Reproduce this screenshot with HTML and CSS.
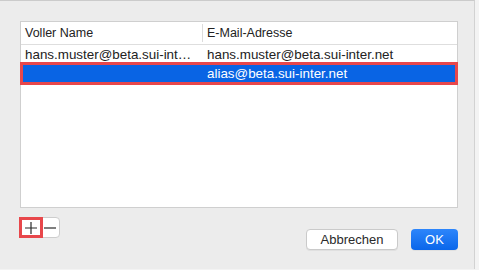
FILE: index.html
```html
<!DOCTYPE html>
<html lang="de">
<head>
  <meta charset="UTF-8" />
  <title>E-Mail-Adressen</title>
  <link rel="stylesheet" href="styles.css">
</head>
<body>

<div class="dialog">
  <div class="table">
    <div class="row head">
      <div class="cell name">Voller Name</div>
      <div class="cell mail">E-Mail-Adresse</div>
    </div>
    <div class="row">
      <div class="cell name">hans.muster@beta.sui-inter.net</div>
      <div class="cell mail">hans.muster@beta.sui-inter.net</div>
    </div>
    <div class="row selected">
      <div class="cell name"></div>
      <div class="cell mail">alias@beta.sui-inter.net</div>
    </div>
  </div>

  <div class="footer">
    <div class="segmented">
      <button class="seg add">
        <svg width="14" height="14" viewBox="0 0 14 14"><path d="M7 1v12M1 7h12" stroke="#2b2b2b" stroke-width="1.2" fill="none"/></svg>
      </button>
      <button class="seg remove">
        <svg width="14" height="14" viewBox="0 0 14 14"><path d="M1 7h12" stroke="#2b2b2b" stroke-width="1.2" fill="none"/></svg>
      </button>
    </div>
    <div class="actions">
      <button class="btn">Abbrechen</button>
      <button class="btn primary">OK</button>
    </div>
  </div>
</div>

</body>
</html>
```

FILE: styles.css
```css
body {
  margin: 0;
  background: #f3f3f3;
  font-family: "Liberation Sans", Arial, sans-serif;
  color: #222;
}

.dialog {
  width: 475px;
  height: 269px;
  background: #ececec;
  border-top: 1px solid #cbcbcb;
  border-right: 1px solid #d2d2d2;
  padding: 20px 0 0 20px;
  box-sizing: border-box;
}

.table {
  width: 438px;
  height: 187px;
  background: #fff;
  border: 1px solid #cfcfcf;
  box-sizing: border-box;
}

.row {
  display: flex;
  height: 18px;
  align-items: center;
  font-size: 13.4px;
}

.row.head {
  height: 22px;
  border-bottom: 1px solid #dedede;
  font-size: 12.5px;
}

.cell {
  white-space: nowrap;
  overflow: hidden;
  text-overflow: ellipsis;
  box-sizing: border-box;
}

.cell.name {
  width: 181px;
  padding: 0 6px 0 4px;
}

.cell.mail {
  flex: 1;
  padding-left: 5px;
}

.head .cell.mail {
  border-left: 1px solid #dcdcdc;
  height: 18px;
  line-height: 18px;
  padding-left: 4px;
}

.row.selected {
  height: 21px;
  background: #0964e4;
  color: #fff;
  outline: 3px solid #e8474b;
  outline-offset: -2px;
}

.footer {
  display: flex;
  justify-content: space-between;
  align-items: flex-start;
  width: 438px;
  margin-top: 9px;
}

.segmented {
  display: flex;
  width: 41px;
  height: 21px;
  background: #fff;
  border: 1px solid #cdcdcd;
  border-radius: 4px;
  box-sizing: border-box;
  margin-left: -1px;
}

.seg {
  border: none;
  background: none;
  padding: 0;
  display: flex;
  align-items: center;
  justify-content: center;
}

.seg.add {
  width: 22px;
  height: 19px;
  outline: 3px solid #e8474b;
  outline-offset: -2px;
}

.seg.remove {
  width: 16px;
  height: 19px;
}

.actions {
  display: flex;
  gap: 13px;
  margin-top: 12px;
}

.btn {
  height: 21px;
  width: 92px;
  font-family: "Liberation Sans", Arial, sans-serif;
  font-size: 13px;
  color: #2a2a2a;
  background: #fff;
  border: 1px solid #cacaca;
  border-radius: 4px;
  padding: 0;
  box-shadow: 0 1px 0 rgba(0,0,0,0.05);
}

.btn.primary {
  width: 47px;
  color: #fff;
  border: none;
  background: linear-gradient(#2d86fb, #0a66ea);
}
```
